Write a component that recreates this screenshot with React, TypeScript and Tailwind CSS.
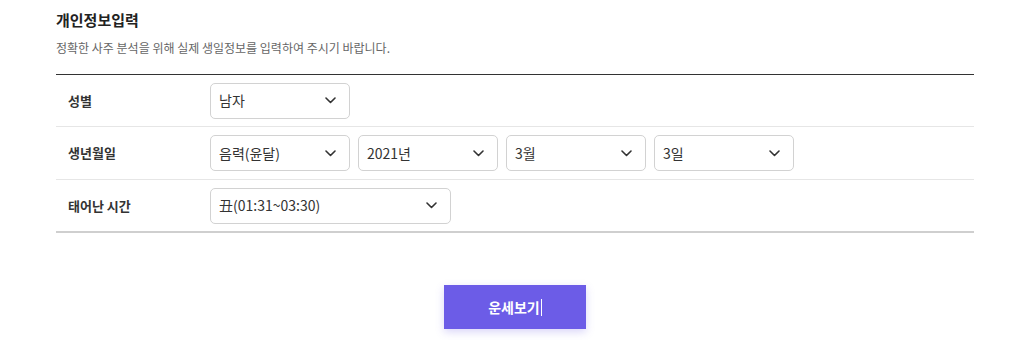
import React from 'react';

const font = { fontFamily: '"Noto Sans CJK KR", "Noto Sans", sans-serif' };

function Chevron() {
  return (
    <svg width="11" height="7" viewBox="0 0 11 7" fill="none" className="shrink-0">
      <path d="M1 1l4.5 4.5L10 1" stroke="#333" strokeWidth="1.6" strokeLinecap="round" strokeLinejoin="round" />
    </svg>
  );
}

function Select({ value, width }: { value: string; width: string }) {
  return (
    <div
      className={`${width} h-[36px] flex items-center justify-between pl-[8px] pr-[13px] border border-[#d2d2d2] rounded-[5px] bg-white text-[14px] text-[#333]`}
    >
      <span>{value}</span>
      <Chevron />
    </div>
  );
}

function Row({ label, children, last, first }: { label: string; children: React.ReactNode; last?: boolean; first?: boolean }) {
  return (
    <div
      className={`flex items-center ${first ? 'h-[52px]' : 'h-[53px]'} ${last ? 'border-b-2 border-[#cfcfcf]' : 'border-b border-[#e6e6e6]'}`}
    >
      <div className="w-[154px] pl-[12px] text-[13px] font-bold text-[#333]">{label}</div>
      <div className="flex gap-2">{children}</div>
    </div>
  );
}

export default function App() {
  return (
    <div className="w-[1030px] h-[340px] bg-white" style={font}>
      <div className="w-[918px] ml-[56px]">
        <h2 className="pt-[10px] text-[15px] leading-[20px] font-semibold text-[#222]">개인정보입력</h2>
        <p className="mt-[10px] text-[12px] leading-[16px] text-[#666]">
          정확한 사주 분석을 위해 실제 생일정보를 입력하여 주시기 바랍니다.
        </p>
        <div className="mt-[18px] border-t border-[#333]">
          <Row label="성별" first>
            <Select value="남자" width="w-[140px]" />
          </Row>
          <Row label="생년월일">
            <Select value="음력(윤달)" width="w-[140px]" />
            <Select value="2021년" width="w-[140px]" />
            <Select value="3월" width="w-[140px]" />
            <Select value="3일" width="w-[140px]" />
          </Row>
          <Row label="태어난 시간" last>
            <Select value="丑(01:31~03:30)" width="w-[241px]" />
          </Row>
        </div>
        <div className="flex justify-center mt-[52px]">
          <button className="w-[142px] h-[44px] bg-[#6c5ce7] text-white text-[14px] font-bold flex items-center justify-center shadow-[0_3px_8px_rgba(108,92,231,0.25)]">
            운세보기
            <span className="inline-block w-[1px] h-[17px] bg-white ml-[1px]" />
          </button>
        </div>
      </div>
    </div>
  );
}
